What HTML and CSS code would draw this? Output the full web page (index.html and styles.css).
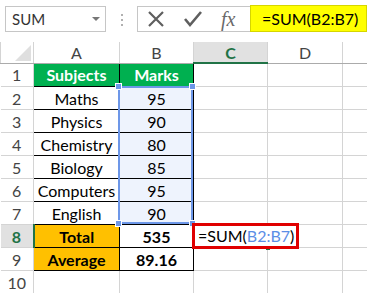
FILE: index.html
```html
<!DOCTYPE html>
<html lang="en">
<head>
    <meta charset="UTF-8">
    <title>SUM</title>
    <link rel="stylesheet" href="styles.css">
</head>
<body>
    <div class="bar">
        <div class="namebox">
            <span>SUM</span>
            <span class="arrow"></span>
        </div>
        <div class="dots"><i></i><i></i><i></i></div>
        <div class="tools">
            <svg class="icon" width="20" height="20" viewBox="0 0 20 20">
                <path d="M3 3 L17 17 M17 3 L3 17" stroke="#5f5f5f" stroke-width="2.2" fill="none"/>
            </svg>
            <svg class="icon" width="20" height="20" viewBox="0 0 20 20">
                <path d="M2 10 L7 16 L18 3" stroke="#5f5f5f" stroke-width="2.6" fill="none"/>
            </svg>
            <span class="fx">fx</span>
        </div>
        <div class="formula">=SUM(B2:B7)</div>
    </div>

    <div class="grid">
        <table class="sheet">
            <colgroup>
                <col class="c-rn"><col class="c-a"><col class="c-b"><col class="c-c"><col class="c-d"><col class="c-e">
            </colgroup>
            <tr class="colhead">
                <th class="corner"><span class="tri"></span></th>
                <th>A</th><th>B</th><th class="on">C</th><th>D</th><th></th>
            </tr>
            <tr>
                <th class="rn">1</th>
                <td class="title">Subjects</td><td class="title">Marks</td><td></td><td></td><td></td>
            </tr>
            <tr>
                <th class="rn">2</th>
                <td class="box">Maths</td><td class="box pick">95</td><td></td><td></td><td></td>
            </tr>
            <tr>
                <th class="rn">3</th>
                <td class="box">Physics</td><td class="box pick">90</td><td></td><td></td><td></td>
            </tr>
            <tr>
                <th class="rn">4</th>
                <td class="box">Chemistry</td><td class="box pick">80</td><td></td><td></td><td></td>
            </tr>
            <tr>
                <th class="rn">5</th>
                <td class="box">Biology</td><td class="box pick">85</td><td></td><td></td><td></td>
            </tr>
            <tr>
                <th class="rn">6</th>
                <td class="box">Computers</td><td class="box pick">95</td><td></td><td></td><td></td>
            </tr>
            <tr>
                <th class="rn">7</th>
                <td class="box">English</td><td class="box pick">90</td><td></td><td></td><td></td>
            </tr>
            <tr>
                <th class="rn on">8</th>
                <td class="box sum">Total</td><td class="box bold">535</td>
                <td class="active"><span class="edit">=SUM(<span class="ref">B2:B7</span>)</span><span class="fill"></span></td>
                <td></td><td></td>
            </tr>
            <tr>
                <th class="rn">9</th>
                <td class="box sum">Average</td><td class="box bold">89.16</td><td></td><td></td><td></td>
            </tr>
            <tr>
                <th class="rn">10</th>
                <td></td><td></td><td></td><td></td><td></td>
            </tr>
        </table>
        <div class="range">
            <span class="h tl"></span><span class="h tr"></span><span class="h bl"></span><span class="h br"></span>
        </div>
    </div>
</body>
</html>
```

FILE: styles.css
```css
body {
    margin: 0;
    width: 367px;
    height: 293px;
    overflow: hidden;
    background: #fff;
    font-family: Lato, "Liberation Sans", sans-serif;
    font-size: 16px;
    color: #000;
}
.bar {
    display: flex;
    align-items: flex-start;
    height: 42px;
    padding-top: 5px;
    box-sizing: border-box;
}
.namebox {
    display: flex;
    align-items: center;
    justify-content: space-between;
    margin: 1px 0 0 5px;
    width: 101px;
    height: 26px;
    box-sizing: border-box;
    border: 1px solid #c6c6c6;
    padding: 0 5px 0 6px;
    color: #333;
    font-size: 15px;
}
.arrow {
    width: 0;
    height: 0;
    border-left: 4px solid transparent;
    border-right: 4px solid transparent;
    border-top: 4px solid #777;
}
.dots {
    display: flex;
    flex-direction: column;
    gap: 3px;
    width: 31px;
    align-items: center;
    padding-top: 9px;
}
.dots i {
    width: 2px;
    height: 2px;
    background: #b0b0b0;
}
.tools {
    display: flex;
    align-items: center;
    margin-top: 1px;
    width: 113px;
    height: 26px;
    box-sizing: border-box;
    border: 1px solid #c6c6c6;
    border-right: none;
    padding-left: 8px;
    gap: 17px;
}
.fx {
    font-family: "Liberation Serif", serif;
    font-style: italic;
    font-size: 20px;
    color: #6a6a6a;
    margin-left: 1px;
}
.formula {
    flex: 1;
    height: 27px;
    box-sizing: border-box;
    background: #ffff00;
    border: 1px solid #d6d600;
    padding: 3px 0 0 11px;
}
.grid {
    position: relative;
}
.sheet {
    border-collapse: collapse;
    table-layout: fixed;
    width: 367px;
}
.c-rn { width: 33px; }
.c-a { width: 86px; }
.c-b { width: 74px; }
.c-c { width: 74px; }
.c-d { width: 75px; }
.c-e { width: 25px; }
.sheet td, .sheet th {
    height: 22px;
    padding: 0;
    border: 1px solid #d4d4d4;
    text-align: center;
    white-space: nowrap;
    overflow: visible;
    font-weight: normal;
}
.sheet .colhead th {
    height: 20px;
    border-top: none;
    border-bottom: 1px solid #ababab;
    color: #444;
}
.sheet .colhead th.on {
    background: #e1e1e1;
    color: #217346;
    font-weight: bold;
    border-bottom: 2px solid #217346;
}
.corner {
    position: relative;
}
.tri {
    position: absolute;
    right: 2px;
    bottom: 2px;
    width: 0;
    height: 0;
    border-left: 16px solid transparent;
    border-bottom: 16px solid #dfdfdf;
}
.sheet th.rn {
    color: #444;
    border-left: none;
}
.sheet th.rn.on {
    background: #e1e1e1;
    color: #217346;
    font-weight: bold;
    border-right: 2px solid #217346;
}
.sheet td.title {
    background: #00b050;
    color: #fff;
    font-weight: bold;
    border-right: 1px solid #000;
    border-bottom: 1px solid #000;
}
.sheet td.box {
    border: 1px solid #000;
}
.sheet td.pick {
    background: #eef3fd;
}
.sheet td.sum {
    background: #ffc000;
    font-weight: bold;
}
.sheet td.bold {
    font-weight: bold;
}
.active {
    position: relative;
}
.edit {
    position: absolute;
    left: -2px;
    top: -2px;
    width: 107px;
    height: 26px;
    box-sizing: border-box;
    border: 3px solid #e00000;
    background: #fff;
    padding-left: 3px;
    text-align: left;
    line-height: 20px;
    z-index: 2;
}
.ref {
    color: #5b8ee6;
}
.fill {
    position: absolute;
    right: -3px;
    bottom: -3px;
    width: 4px;
    height: 4px;
    background: #217346;
}
.range {
    position: absolute;
    left: 118px;
    top: 44px;
    width: 75px;
    height: 138px;
    box-sizing: border-box;
    border: 2px solid #6d97e8;
}
.h {
    position: absolute;
    width: 5px;
    height: 5px;
    background: #6d97e8;
    border: 1px solid #fff;
}
.tl { left: -5px; top: -5px; }
.tr { right: -5px; top: -5px; }
.bl { left: -5px; bottom: -5px; }
.br { right: -5px; bottom: -5px; }
```
